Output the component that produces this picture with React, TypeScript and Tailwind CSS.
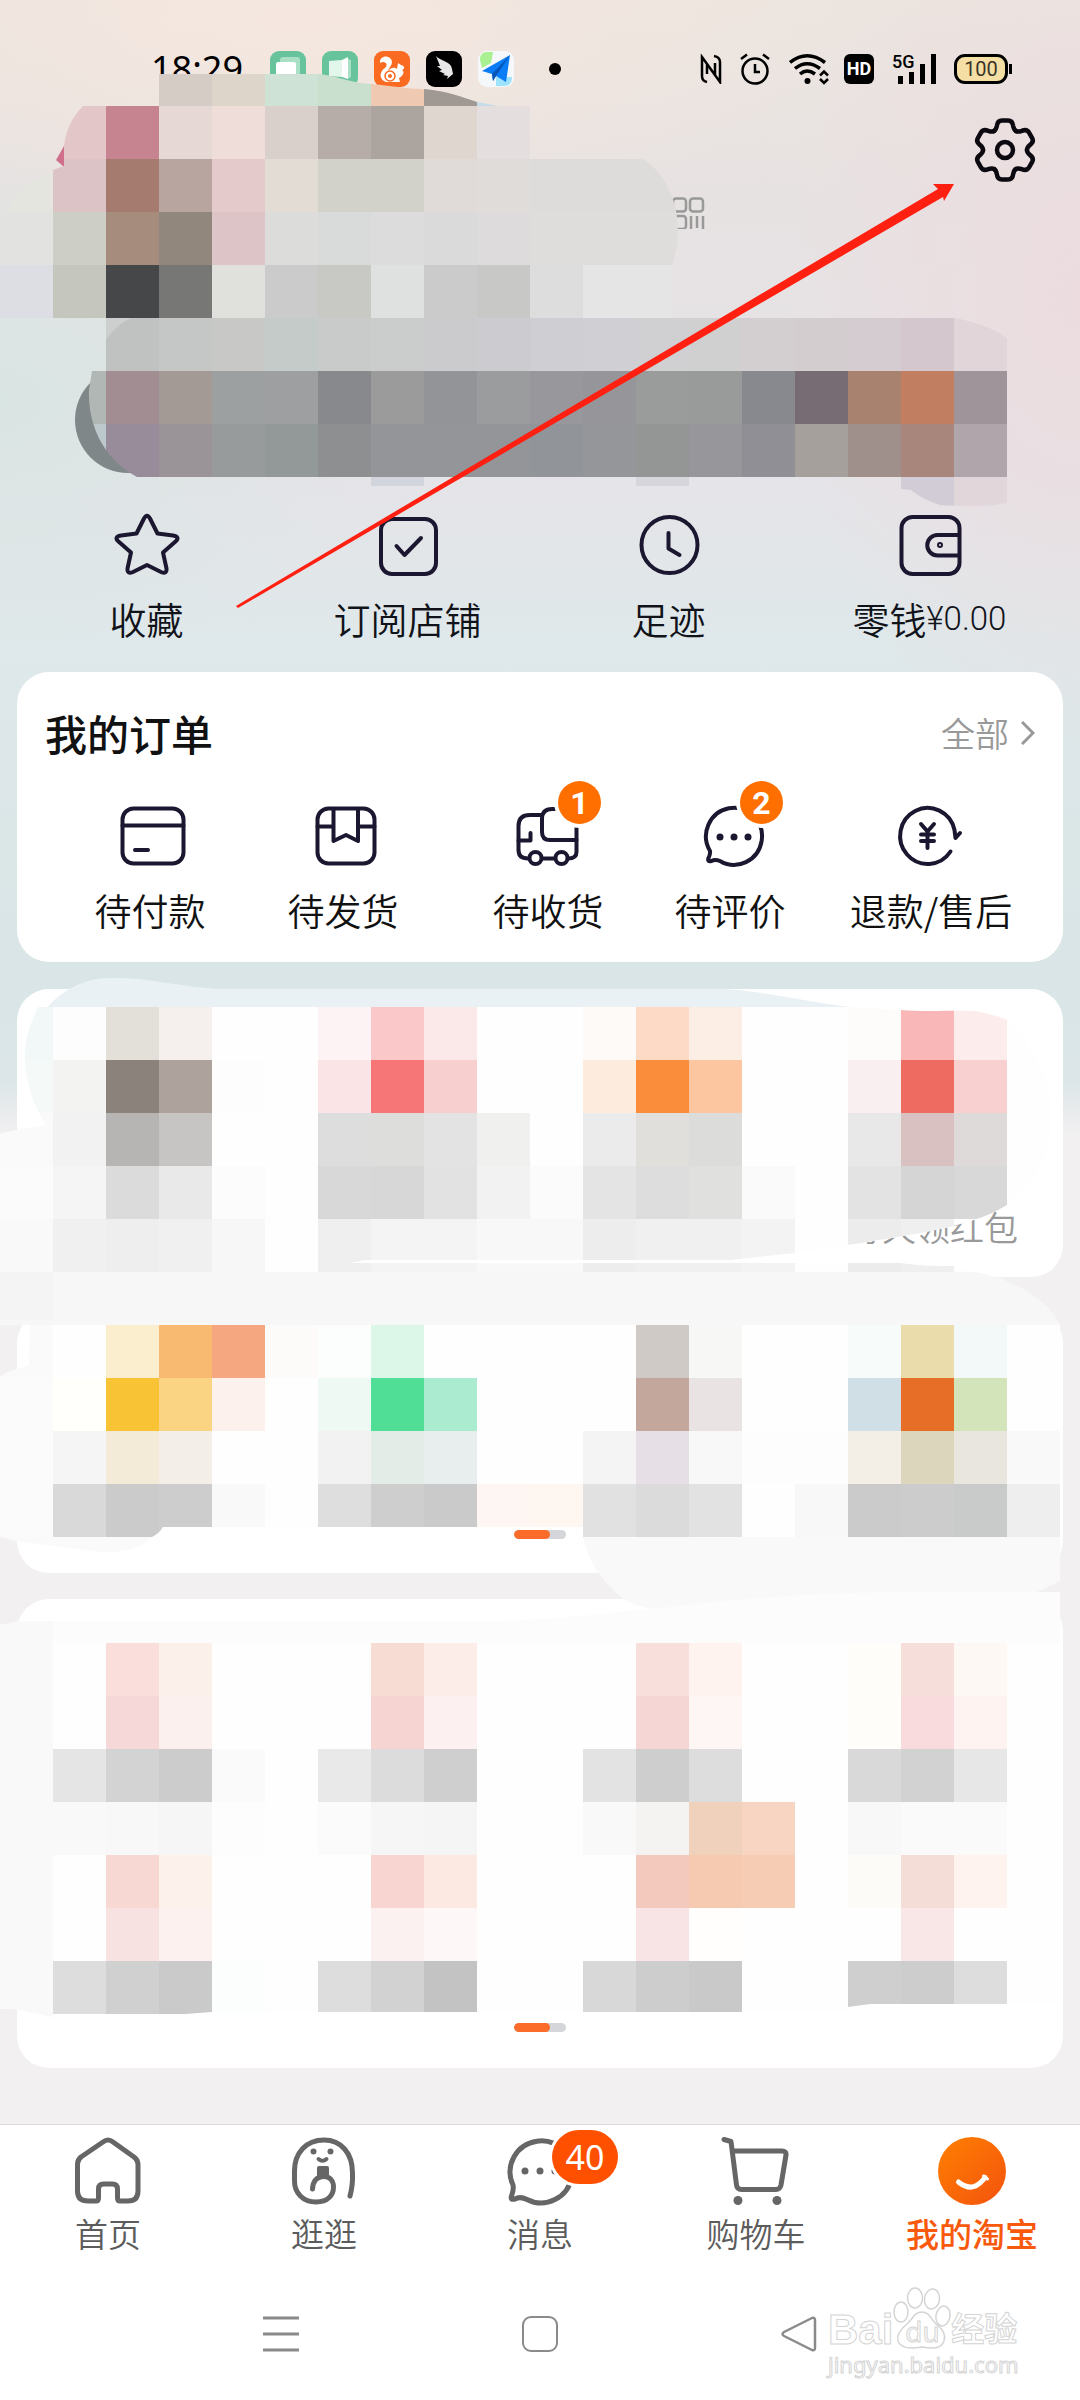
import type { ReactNode } from 'react'

type Cell = [col: number, color: string]
type Row = [row: number, cells: Cell[]]

const CELL = 53

const heroRows: Row[] = [
  [1, [[3, '#d5ccc5'], [4, '#ddd4ca'], [5, '#cfe2d6'], [6, '#c9e0cf'], [7, '#efc9b1'], [8, '#9f9893'], [9, '#c5dbe6']]],
  [2, [[1, '#e3c7c8'], [2, '#c68390'], [3, '#e5d8d5'], [4, '#efddd9'], [5, '#dad0cb'], [6, '#b6ada8'], [7, '#aca49e'], [8, '#dfd6d0'], [9, '#e4dfde']]],
  [3, [[0, '#e4e5df'], [1, '#dcc4c6'], [2, '#a57a6f'], [3, '#b8a5a0'], [4, '#e5cacc'], [5, '#e2dcd5'], [6, '#d2d2cb'], [7, '#d2d2cb'], [8, '#e0dbd8'], [9, '#e0dcd9'], [10, '#dedcda'], [11, '#dedcda'], [12, '#dedcda']]],
  [4, [[0, '#e2e2e1'], [1, '#cdcec6'], [2, '#a68c7d'], [3, '#91877d'], [4, '#ddc4c7'], [5, '#dcdcda'], [6, '#d9dada'], [7, '#dcdcdc'], [8, '#dadada'], [9, '#dddbdb'], [10, '#dedddc'], [11, '#dedddc'], [12, '#dedddc']]],
  [5, [[0, '#dddde4'], [1, '#c5c6be'], [2, '#464749'], [3, '#777775'], [4, '#e0e1dc'], [5, '#cbcbcb'], [6, '#c8c8c5'], [7, '#dfe1e0'], [8, '#cbcbcb'], [9, '#c8c8c7'], [10, '#dedddd'], [11, '#e6e5e5'], [12, '#e6e5e5']]],
  [6, [[2, '#c0c2c1'], [3, '#c5c6c6'], [4, '#c8c9c6'], [5, '#c5cbc9'], [6, '#c9cbca'], [7, '#cbcccc'], [8, '#cbcbcd'], [9, '#cccbcf'], [10, '#cfced2'], [11, '#d0cfd3'], [12, '#d0cfd2'], [13, '#d0d0d1'], [14, '#d3cfd1'], [15, '#d3cdd0'], [16, '#d5ccd1'], [17, '#d4c8ce'], [18, '#e2d5d9']]],
  [7, [[1, '#b0b7b5'], [2, '#a18d92'], [3, '#a39995'], [4, '#9da0a1'], [5, '#9e9fa1'], [6, '#87898d'], [7, '#9b9b9c'], [8, '#929498'], [9, '#9b9c9d'], [10, '#97979c'], [11, '#96969a'], [12, '#9a9b9b'], [13, '#999a9a'], [14, '#88888f'], [15, '#786c74'], [16, '#a9816f'], [17, '#c17e61'], [18, '#9e9499']]],
  [8, [[1, '#bcc8cc'], [2, '#988c9b'], [3, '#9a9499'], [4, '#989b9b'], [5, '#939899'], [6, '#8e8f91'], [7, '#949598'], [8, '#949599'], [9, '#949599'], [10, '#919499'], [11, '#94969a'], [12, '#949696'], [13, '#96969b'], [14, '#8f8f95'], [15, '#a5a09c'], [16, '#a0908c'], [17, '#a9867b'], [18, '#afa5aa']]],
  [9, [[7, '#d2d5dc'], [12, '#d7d6dd'], [17, '#d1ccd5'], [18, '#e1d7db']]],
]

const serviceRows: Row[] = [
  [19, [[0, '#f2f8f8'], [1, '#fdfdfd'], [2, '#e3dfd9'], [3, '#f5f0ed'], [6, '#fef3f4'], [7, '#fac8c9'], [8, '#fbe9e9'], [11, '#fefaf8'], [12, '#fcdac6'], [13, '#fceee4'], [16, '#fdfcfa'], [17, '#f9b7b8'], [18, '#fcecec']]],
  [20, [[0, '#f5f9f8'], [1, '#f3f3f1'], [2, '#8c827c'], [3, '#ada29c'], [4, '#fdfdfd'], [6, '#fbe4e6'], [7, '#f67576'], [8, '#f8cfcf'], [11, '#fdebde'], [12, '#fa8d3c'], [13, '#fcc6a1'], [16, '#f9eff0'], [17, '#ee6b62'], [18, '#f9d0d0']]],
  [21, [[0, '#fafafa'], [1, '#f2f2f2'], [2, '#b6b5b3'], [3, '#c6c5c3'], [4, '#fefefe'], [6, '#dddddd'], [7, '#dddddb'], [8, '#e3e3e3'], [9, '#f0f0ee'], [11, '#ebebeb'], [12, '#e0dfdc'], [13, '#dcdcda'], [14, '#fefefe'], [16, '#e8e8e8'], [17, '#d9c1c1'], [18, '#dddad9']]],
  [22, [[0, '#fbfbfb'], [1, '#f5f5f5'], [2, '#dbdbdb'], [3, '#e9e9e9'], [4, '#fcfcfc'], [6, '#d8d8d8'], [7, '#d7d7d7'], [8, '#e2e2e2'], [9, '#f2f2f2'], [10, '#fbfbfb'], [11, '#e4e4e4'], [12, '#dddddd'], [13, '#e0e0df'], [14, '#fafafa'], [15, '#fefefe'], [16, '#e3e3e3'], [17, '#d5d5d5'], [18, '#d8d8d8']]],
  [23, [[0, '#f9f9f9'], [1, '#f0f0f0'], [2, '#eeeeee'], [3, '#f0f0f0'], [4, '#f7f7f7'], [6, '#efefef'], [7, '#f4f4f4'], [8, '#f4f4f4'], [9, '#f8f8f8'], [10, '#f8f8f8'], [11, '#ededed'], [12, '#f0f0f0'], [13, '#f0f0f0'], [14, '#f3f3f3'], [16, '#ececec'], [17, '#efefef']]],
]

const toolRows: Row[] = [
  [25, [[0, '#fafafa'], [2, '#fbeecf'], [3, '#f8b970'], [4, '#f5a77f'], [5, '#fdfbf9'], [6, '#fbfefd'], [7, '#dcf6e8'], [12, '#d0cac6'], [13, '#f7f7f5'], [16, '#f7fcfb'], [17, '#eaddab'], [18, '#f3f9f9']]],
  [26, [[0, '#fbfbfb'], [1, '#fffffc'], [2, '#f8c335'], [3, '#fad482'], [4, '#fdf1ee'], [6, '#edf9f2'], [7, '#50de97'], [8, '#abecd0'], [12, '#c3a79c'], [13, '#e9e4e3'], [16, '#d0dfe5'], [17, '#e76e26'], [18, '#d4e4ba']]],
  [27, [[0, '#fbfbfb'], [1, '#f5f5f5'], [2, '#f3ead7'], [3, '#f3efe8'], [6, '#f2f2f2'], [7, '#e3ece7'], [8, '#e8eeed'], [11, '#f4f4f4'], [12, '#e6e0e6'], [13, '#f8f8f8'], [14, '#fdfdfd'], [15, '#fdfdfd'], [16, '#f3efe6'], [17, '#dcd6bc'], [18, '#e8e6df'], [19, '#f9f9f9']]],
  [28, [[0, '#fbfbfb'], [1, '#d9d9d9'], [2, '#cbcbcb'], [3, '#cdcdcd'], [4, '#f9f9f9'], [6, '#dedede'], [7, '#cecece'], [8, '#cacaca'], [9, '#fef6f3'], [10, '#fdf6f1'], [11, '#e1e1e1'], [12, '#dbdbdb'], [13, '#e2e2e2'], [15, '#f8f8f8'], [16, '#cbcbcb'], [17, '#cccccc'], [18, '#c9cbca'], [19, '#eeeeee']]],
]

const playRows: Row[] = [
  [31, [[2, '#f9dedb'], [3, '#fbf1ea'], [7, '#f7dcd3'], [8, '#fcede8'], [12, '#f9dfdc'], [13, '#fff3f0'], [16, '#fffdfa'], [17, '#f6dfda'], [18, '#fef8f4']]],
  [32, [[2, '#f7d8d8'], [3, '#fcf0ee'], [7, '#f6d4d2'], [8, '#fcf1f0'], [12, '#f5d6d5'], [13, '#fdf6f4'], [16, '#fffdfa'], [17, '#f9dbde'], [18, '#fff3f1']]],
  [33, [[1, '#e5e5e5'], [2, '#d3d3d3'], [3, '#cccccc'], [4, '#fafafa'], [6, '#e9e9e9'], [7, '#dcdcdc'], [8, '#cfcfcf'], [11, '#e3e3e3'], [12, '#cecece'], [13, '#dddddd'], [16, '#d9d9d9'], [17, '#d2d2d2'], [18, '#e7e7e7']]],
  [34, [[1, '#f9f9f9'], [2, '#f8f8f8'], [3, '#f6f6f6'], [4, '#fdfdfd'], [6, '#fbfbfb'], [7, '#f6f6f6'], [8, '#f5f5f5'], [11, '#f9f9f9'], [12, '#f4f3f1'], [13, '#f0d2bc'], [14, '#f8d5c3'], [16, '#f8f8f8'], [17, '#fafafa'], [18, '#fafafa']]],
  [35, [[2, '#f7d8d3'], [3, '#fcf1eb'], [7, '#f8d5d0'], [8, '#fce9e2'], [12, '#f3c9be'], [13, '#f5cab1'], [14, '#f6ccb4'], [16, '#fdfbf8'], [17, '#f5ddd7'], [18, '#fff3f0']]],
  [36, [[2, '#f7e2e1'], [3, '#fdf1f0'], [7, '#fcf1f1'], [8, '#fef7f7'], [12, '#f8e4e5'], [13, '#fffefc'], [17, '#f9e6e7']]],
  [37, [[1, '#dddddd'], [2, '#d0d0d0'], [3, '#cacaca'], [4, '#fcfefe'], [6, '#dddddd'], [7, '#d2d2d2'], [8, '#c3c3c3'], [11, '#d8d8d8'], [12, '#cdcdcd'], [13, '#c9c9c9'], [16, '#cfcfcf'], [17, '#cdcdcd'], [18, '#dddddd']]],
]

function Mosaic({ rows }: { rows: Row[] }) {
  return (
    <g shapeRendering="crispEdges">
      {rows.map(([row, cells]) =>
        cells.map(([col, color]) => (
          <rect key={`${row}-${col}`} x={col * CELL} y={row * CELL} width={CELL} height={CELL} fill={color} />
        )),
      )}
    </g>
  )
}

function HeroMosaic() {
  return (
    <svg viewBox="0 0 1080 520" className="pointer-events-none absolute inset-x-0 top-0 w-full" aria-hidden="true">
      <clipPath id="hero-clip">
        <path d="M159 74H320C345 78 352 83 371 84C395 86 405 89 424 89C448 91 462 97 477 102L499 106H530V159H643C664 172 678 200 678 230C678 245 675 256 672 265V318H954C976 322 993 328 1007 338V503C985 508 960 506 940 505C928 501 920 497 911 490L901 489V477H689V486H636V477H424V486H371V477H137C124 470 115 462 106 450C94 433 88 411 89 390L92 371H106V318H0V228C2 220 4 215 6 212C15 195 33 177 53 172V170L64 166V146C66 130 72 117 83 106H159Z" />
      </clipPath>
      <path d="M56 160 64 146V167Z" fill="#cf6f8c" />
      <g clipPath="url(#hero-clip)">
        <Mosaic rows={heroRows} />
        <path d="M106 340C112 331 121 322 132 318H106Z" fill="#cccfce" />
      </g>
    </svg>
  )
}

function ServicesMosaic() {
  return (
    <svg viewBox="0 962 1080 1162" className="pointer-events-none absolute inset-x-0 top-0 w-full" aria-hidden="true">
      <clipPath id="service-clip">
        <path d="M53 1007H848L901 1010C925 1012 955 1010 975 1011C990 1014 1000 1017 1007 1020C1034 1045 1052 1080 1052 1115C1052 1160 1030 1190 1007 1205C975 1225 930 1232 848 1245L795 1253L730 1260H365L350 1263H901C920 1266 940 1266 954 1266L975 1272H0V1134C15 1129 32 1128 46 1125C30 1100 24 1075 25 1050C26 1035 32 1020 38 1007Z" />
      </clipPath>
      <clipPath id="tool-clip">
        <path d="M30 1325H1060V1537H583V1527H163C160 1532 156 1535 152 1537H0V1376C10 1370 22 1368 29 1365Z" />
      </clipPath>
      <clipPath id="play-clip">
        <path d="M53 1643H1060V2004H870L848 2007V2012H212L185 2014H53Z" />
      </clipPath>

      <path d="M48 1007C62 990 85 978 110 978C145 977 175 986 220 989H725C770 992 805 1002 850 1007Z" fill="#eaf1f4" />
      <g clipPath="url(#service-clip)">
        <path d="M0 1007H1060V1272H0Z" fill="#fefefe" />
        <path d="M0 1113H53V1272H0Z" fill="#fafafa" />
        <Mosaic rows={serviceRows} />
      </g>

      <path d="M0 1272H975C1010 1278 1048 1298 1060 1325H0Z" fill="#f7f7f7" />
      <path d="M0 1272H53V1320H0Z" fill="#f4f4f4" />
      <g clipPath="url(#tool-clip)">
        <path d="M53 1325H1060V1537H53Z" fill="#fefefe" />
        <Mosaic rows={toolRows} />
      </g>
      <path d="M0 1537H152C140 1549 122 1553 100 1552C75 1548 45 1545 16 1541Z" fill="#fafafa" />
      <path d="M583 1537H1060V1581L1037 1592C960 1592 840 1592 750 1606C700 1614 650 1614 625 1600C600 1580 588 1560 583 1537Z" fill="#f9f9f9" />

      <path d="M0 1625 22 1621H500C580 1618 610 1612 660 1608C760 1595 850 1592 920 1592H1060V1643H0Z" fill="#fcfcfc" />
      <path d="M0 1625 22 1621H53V2017C35 2014 20 2008 0 2009Z" fill="#f9f9f9" />
      <g clipPath="url(#play-clip)">
        <path d="M53 1643H1060V2014H53Z" fill="#fefefe" />
        <Mosaic rows={playRows} />
      </g>
    </svg>
  )
}

function Arrow() {
  return (
    <svg viewBox="0 0 1080 672" className="pointer-events-none absolute inset-x-0 top-0 w-full" aria-hidden="true">
      <path d="M236 606 938 189 933 184H954L944 201 943 197 238 608Z" fill="#ff2012" />
    </svg>
  )
}

function LineIcon({ children }: { children: ReactNode }) {
  return (
    <svg
      viewBox="0 0 64 64"
      className="h-16 w-16 overflow-visible"
      fill="none"
      stroke="#1c1730"
      strokeWidth="4"
      strokeLinecap="round"
      strokeLinejoin="round"
      aria-hidden="true"
    >
      {children}
    </svg>
  )
}

function TabIcon({ children }: { children: ReactNode }) {
  return (
    <svg
      viewBox="0 0 72 72"
      className="h-[72px] w-[72px]"
      fill="none"
      stroke="#666"
      strokeWidth="5"
      strokeLinecap="round"
      strokeLinejoin="round"
      aria-hidden="true"
    >
      {children}
    </svg>
  )
}

const shortcuts = [
  {
    label: '收藏',
    icon: (
      <path d="M29 6.5Q32 1 35 6.5L42.5 21.5 58 23.5Q65.500 25 60.500 29.500L48 40.500 51.500 56.500Q52 62.500 46 60L32 53 18 60Q12 62.500 12.500 56.500L16 40.500 3.500 29.500Q-1.500 25 6 23.500L21.500 21.500Z" />
    ),
  },
  {
    label: '订阅店铺',
    icon: (
      <>
        <rect x="5" y="7" width="55" height="55" rx="11" />
        <path d="M20.500 34 28.500 43 45 26" />
      </>
    ),
  },
  {
    label: '足迹',
    icon: (
      <>
        <circle cx="32.500" cy="33" r="28" />
        <path d="M31.500 21V36.500L42.500 43" />
      </>
    ),
  },
  {
    label: '零钱',
    amount: '¥0.00',
    icon: (
      <>
        <rect x="3.500" y="5" width="58" height="57" rx="11" />
        <path d="M61 23H39.500A10.200 10.200 0 0 0 39.500 43.500H61" />
        <circle cx="42" cy="33" r="1" />
      </>
    ),
  },
]

const orders = [
  {
    label: '待付款',
    icon: (
      <>
        <rect x="4.500" y="4.500" width="61" height="55" rx="11" />
        <path d="M4.500 21.500H65.500M17 46H30" />
      </>
    ),
  },
  {
    label: '待发货',
    icon: (
      <>
        <rect x="6.500" y="4.500" width="57" height="55" rx="11" />
        <path d="M22.500 5V37L35 31 47 37V5M6.500 22.500H22M47 22.500H63.500" />
      </>
    ),
  },
  {
    label: '待收货',
    badge: 1,
    icon: (
      <>
        <path d="M25 11H14Q2.500 11 2.500 22V46Q2.500 54.500 12 54.500M26 54.500H38M52 54.500Q60.500 54.500 60.500 48V6" />
        <path d="M60.500 36H34Q26 36 26 28V15Q26 5 36 5H60M2.500 36.500H14.500V29" />
        <circle cx="19.500" cy="54" r="6" />
        <circle cx="45.500" cy="54" r="6" />
      </>
    ),
  },
  {
    label: '待评价',
    badge: 2,
    icon: (
      <>
        <path d="M12 47A28 28.500 0 1 1 22 57Q17 55 13.500 57Q9 58 10.500 54Q12.500 50 12 47Z" />
        <g fill="#1c1730" stroke="none">
          <circle cx="22" cy="33" r="3.500" />
          <circle cx="36" cy="33" r="3.500" />
          <circle cx="50" cy="33" r="3.500" />
        </g>
      </>
    ),
  },
  {
    label: '退款/售后',
    icon: (
      <>
        <path d="M51.500 47.500A27.500 28 0 1 1 55.500 26L56.500 34 61 29" />
        <path d="M22 20 28.500 27.500 35 20M28.500 28V44M22 30.500H35M22 37H35" />
      </>
    ),
  },
]

const tabs = [
  {
    label: '首页',
    icon: (
      <path d="M31 7Q36 3 41 7L62 22Q66 25 66 29V56Q66 66 56 66H48Q45.500 66 45.500 63V54Q45.500 49 40.500 49H31.500Q26.500 49 26.500 54V63Q26.500 66 24 66H16Q5.500 66 5.500 56V29Q5.500 25 9 22Z" />
    ),
  },
  {
    label: '逛逛',
    icon: (
      <>
        <path d="M62 61Q65 50 64.500 38C64.500 18 53 5 36 5C18 5 6.500 18 6.500 36V46C6.500 58 15 67 28 67C40 67 45.500 60 45.500 52C45.500 45 41 41.500 35.500 41.500C29 41.500 25 46 24.500 54" />
        <path d="M30.500 24Q34.500 27.500 38.500 24" strokeWidth="4" />
        <g fill="#666" stroke="none">
          <circle cx="25.500" cy="16.500" r="3" />
          <circle cx="42.500" cy="16.500" r="3" />
          <rect x="29" y="31" width="12" height="12" rx="2" />
        </g>
      </>
    ),
  },
  {
    label: '消息',
    badge: 40,
    icon: (
      <>
        <path d="M9 50A31 31 0 1 1 23 64.500Q16 61 11 64Q6 65.500 7.500 61Q10 54 9 50Z" />
        <g fill="#666" stroke="none">
          <circle cx="21" cy="36" r="3.500" />
          <circle cx="36" cy="36" r="3.500" />
          <circle cx="51" cy="36" r="3.500" />
        </g>
      </>
    ),
  },
  {
    label: '购物车',
    icon: (
      <>
        <path d="M4 4.500 11 6.500 16.500 50Q17 54.500 21.500 54.500H56Q60 54.500 61 50L66 20Q66.500 16 62 16H12.500" />
        <g fill="#666" stroke="none">
          <circle cx="18" cy="65.500" r="4.500" />
          <circle cx="57" cy="65.500" r="4.500" />
        </g>
      </>
    ),
  },
  {
    label: '我的淘宝',
    active: true,
    icon: (
      <>
        <linearGradient id="smile" x1="0" y1="0" x2="1" y2="1">
          <stop offset="0" stopColor="#ff8000" />
          <stop offset="1" stopColor="#f4530f" />
        </linearGradient>
        <circle cx="36" cy="36" r="34" fill="url(#smile)" stroke="none" />
        <path d="M22.500 47Q36 58 47 45L49 42.500" stroke="#fff" />
        <path d="M47.500 41 51.500 44" stroke="#fff" strokeWidth="3" />
      </>
    ),
  },
]

function StatusBar() {
  return (
    <header className="flex h-[106px] items-start justify-between pt-[51px] pr-[68px] pl-[151px]">
      <div className="flex h-9 items-center">
        <time className="mr-[27px] w-[92px] font-['Noto_Sans'] text-[36px] leading-8 text-black">18:29</time>
        <div className="flex gap-4">
          <svg viewBox="0 0 36 36" className="h-9 w-9" aria-hidden="true">
            <rect width="36" height="36" rx="9" fill="#66c39b" />
            <rect x="10" y="6" width="20" height="22" rx="3" fill="#a9dfc5" />
            <rect x="6" y="11" width="20" height="17" rx="2" fill="#fff" />
          </svg>
          <svg viewBox="0 0 36 36" className="h-9 w-9" aria-hidden="true">
            <rect width="36" height="36" rx="9" fill="#66c39b" />
            <path d="M7 10 20 9V26L7 25Z" fill="#e3f6ec" />
            <path d="M20 9 26 6V28L20 26Z" fill="#fff" />
            <path d="M26 8 29 9V26L26 28Z" fill="#a9dfc5" />
          </svg>
          <svg viewBox="0 0 36 36" className="h-9 w-9" aria-hidden="true">
            <rect width="36" height="36" rx="9" fill="#fa6a21" />
            <path d="M6 12C5 6 13 3 17 8C20 13 15 16 14 20C17 16 21 16 23 18L24 12 27 14C31 15 31 18 28 19C31 21 29 25 25 27L26 31H12C4 28 6 20 11 17C15 14 11 9 6 12Z" fill="#fff" />
            <circle cx="16" cy="25" r="5" fill="#fff" stroke="#fa6a21" strokeWidth="1.500" />
            <circle cx="16" cy="25" r="2" fill="#fa6a21" />
          </svg>
          <svg viewBox="0 0 36 36" className="h-9 w-9" aria-hidden="true">
            <rect width="36" height="36" rx="9" fill="#000" />
            <path d="M10 5C14 10 25 10 26 18L27 23 21 28 22 25 17 24 19 23 13 20 16 19 11 15 14 15Z" fill="#e8e8e8" />
          </svg>
          <svg viewBox="0 0 36 36" className="h-9 w-9" aria-hidden="true">
            <rect width="36" height="36" rx="9" fill="#f4f8fb" />
            <path d="M2 9Q2 1 9 1H15L13 12 4 17Z" fill="#a9f090" />
            <path d="M18 26H34Q34 35 26 35H18Z" fill="#9fe2fb" />
            <path d="M32 4 4 20 14 23 15 30 18 25 28 31Z" fill="#0a7cf5" />
            <path d="M32 4 14 23 15 30 18 25Z" fill="#0556b8" />
          </svg>
        </div>
        <span className="ml-[35px] h-3 w-3 rounded-full bg-black" />
      </div>
      <div className="flex h-9 items-center">
        <svg viewBox="0 0 24 30" className="mr-[17px] h-[30px] w-6" fill="none" stroke="#000" strokeWidth="2.500" aria-hidden="true">
          <path d="M8 28Q3 27 3 22V3L16 21V9M15 2Q21 3 21 8V28L8 10V20" />
        </svg>
        <svg viewBox="0 0 30 32" className="mr-[19px] h-8 w-[30px]" fill="none" stroke="#000" strokeWidth="2.500" aria-hidden="true">
          <circle cx="15" cy="18" r="12.500" />
          <path d="M15 11V19H20M1 6 7 1.500M23 1.500 29 6" />
        </svg>
        <svg viewBox="0 0 40 32" className="mr-[15px] h-8 w-10" fill="none" stroke="#000" strokeWidth="3.500" aria-hidden="true">
          <path d="M1 9.500Q18 -4 36 9.500M6 15.500Q18 6 31 15.500M11 21Q18 15 26 21" />
          <circle cx="18.500" cy="28" r="3" fill="#000" stroke="none" />
          <path d="M31 22.500 35 18.500 39 22.500M31 26 35 30 39 26" strokeWidth="2.500" />
        </svg>
        <span className="mr-[18px] flex h-[30px] w-[30px] items-center justify-center rounded-md bg-black font-['Roboto'] text-[18px] leading-none font-bold text-white">
          HD
        </span>
        <span className="relative mr-[18px] h-[30px] w-11">
          <span className="absolute top-0 left-0 font-['Roboto'] text-[18px] leading-4 font-medium text-black">5G</span>
          <svg viewBox="0 0 44 30" className="h-[30px] w-11" aria-hidden="true">
            <path d="M6 22H11V30H6ZM17 18H22V30H17ZM28 10H33V30H28ZM39 0H44V30H39Z" fill="#000" />
          </svg>
        </span>
        <span className="flex h-[30px] w-[54px] items-center justify-center rounded-[11px] border-3 border-black bg-[#f5dfa4] font-['Roboto'] text-[20px] leading-none text-[#3b3428]">
          100
        </span>
        <span className="ml-px h-[10px] w-[3px] bg-black" />
      </div>
    </header>
  )
}

function Profile() {
  return (
    <section>
      <div className="flex justify-end pt-3 pr-[43px]">
        <button type="button" aria-label="设置" className="h-16 w-16">
          <svg viewBox="-32 -32 64 64" className="h-16 w-16" fill="none" stroke="#0c0a10" strokeWidth="4.500" strokeLinecap="round" aria-hidden="true">
            {[0, 60, 120, 180, 240, 300].map((angle) => (
              <path
                key={angle}
                transform={`rotate(${angle})`}
                d="M-11 -19Q-8.800 -20.300 -8.200 -24Q-7.500 -29.500 -3 -29.500H3Q7.500 -29.500 8.200 -24Q8.800 -20.300 11 -19"
              />
            ))}
            <circle r="8" />
          </svg>
        </button>
      </div>
      <div className="pt-[15px] pl-[62%]">
        <button type="button" aria-label="二维码" className="block h-8">
          <svg viewBox="0 0 36 32" className="h-8 w-9" fill="none" stroke="#999" strokeWidth="2.500" aria-hidden="true">
            <rect x="3" y="1.500" width="13" height="13" rx="3" />
            <rect x="20" y="1.500" width="13" height="13" rx="3" />
            <rect x="3" y="19" width="13" height="13" rx="3" />
            <path d="M21 19V32M27 19V31M33 19V32" />
          </svg>
        </button>
      </div>
      <div className="mt-[138px] mr-[80px] ml-[75px] h-[106px] rounded-full bg-[#7f8789]" />
    </section>
  )
}

function Shortcuts() {
  return (
    <nav className="grid grid-cols-4 pt-[39px] pr-5 pb-[29px] pl-4">
      {shortcuts.map((item) => (
        <a key={item.label} href="#" className="flex flex-col items-center">
          <LineIcon>{item.icon}</LineIcon>
          <span className="mt-[19px] flex h-12 items-center text-[37px] leading-[48px] font-[350] whitespace-nowrap text-[#11131a]">
            {item.label}
            {item.amount && <span className="font-['Roboto'] text-[33px] font-light">{item.amount}</span>}
          </span>
        </a>
      ))}
    </nav>
  )
}

function OrdersCard() {
  return (
    <section className="mx-[17px] rounded-[32px] bg-white pt-[31px] pb-7">
      <div className="flex items-center justify-between px-7">
        <h2 className="text-[42px] leading-[60px] font-medium text-[#111]">我的订单</h2>
        <a href="#" className="flex items-center gap-3 text-[34px] leading-[48px] font-[350] text-[#999]">
          全部
          <svg viewBox="0 0 14 24" className="h-6 w-[14px]" fill="none" stroke="#999" strokeWidth="3" aria-hidden="true">
            <path d="M1 1 12 12 1 23" />
          </svg>
        </a>
      </div>
      <div className="mt-[41px] grid grid-cols-[194fr_192fr_218fr_146fr_256fr] pr-1 pl-9">
        {orders.map((item) => (
          <a key={item.label} href="#" className="flex flex-col items-center">
            <span className="relative">
              <LineIcon>{item.icon}</LineIcon>
              {item.badge && (
                <span className="absolute -top-[23px] left-[42px] flex h-[43px] w-[43px] items-center justify-center rounded-full bg-[#ff6f00] font-['Roboto'] text-[32px] leading-none font-bold text-white ring-4 ring-white">
                  {item.badge}
                </span>
              )}
            </span>
            <span className="mt-[18px] text-[37px] leading-[48px] font-[350] whitespace-nowrap text-[#111]">{item.label}</span>
          </a>
        ))}
      </div>
    </section>
  )
}

function Pager() {
  return (
    <div className="mx-auto h-[9px] w-[52px] overflow-hidden rounded-full bg-[#d5d6da]">
      <div className="h-full w-9 rounded-full bg-[#fb6c2b]" />
    </div>
  )
}

function Services() {
  return (
    <div className="relative px-[17px] pt-[27px] pb-14">
      <section className="flex min-h-[288px] items-end justify-end rounded-[32px] bg-white pr-[45px] pb-[26px]">
        <a href="#" className="text-[34px] leading-[48px] font-[350] text-[#999]">
          每天领红包
        </a>
      </section>
      <section className="mt-[34px] flex min-h-[262px] items-end rounded-[32px] bg-white pb-[34px]">
        <Pager />
      </section>
      <section className="mt-[26px] flex min-h-[469px] items-end rounded-[32px] bg-white pb-9">
        <Pager />
      </section>
      <ServicesMosaic />
    </div>
  )
}

function TabBar() {
  return (
    <nav className="grid grid-cols-5 border-t border-[#dcdadb] bg-white pt-[10px]">
      {tabs.map((tab) => (
        <a key={tab.label} href="#" className="flex flex-col items-center">
          <span className="relative">
            <TabIcon>{tab.icon}</TabIcon>
            {tab.badge && (
              <span className="absolute -top-[5px] left-12 flex h-[54px] w-[66px] items-center justify-center rounded-full bg-[#ff5000] font-['Noto_Sans'] text-[34px] leading-none text-white ring-3 ring-white">
                {tab.badge}
              </span>
            )}
          </span>
          <span
            className={
              tab.active
                ? 'mt-1.5 text-[33px] leading-10 font-medium text-[#f8590c]'
                : 'mt-1.5 text-[33px] leading-10 font-[350] text-[#5c5c5c]'
            }
          >
            {tab.label}
          </span>
        </a>
      ))}
    </nav>
  )
}

function Watermark() {
  return (
    <div className="absolute right-[58px] bottom-6 w-[194px] whitespace-nowrap text-white [-webkit-text-stroke:1px_#d4d4d4]">
      <div className="flex items-end">
        <span className="font-['Liberation_Sans'] text-[42px] leading-[45px] font-bold">Bai</span>
        <span className="relative shrink-0">
          <svg viewBox="0 0 58 66" className="h-[66px] w-[58px]" fill="#fff" stroke="#d4d4d4" strokeWidth="1.500" aria-hidden="true">
            <ellipse cx="8" cy="26" rx="7" ry="10" />
            <ellipse cx="22" cy="12" rx="7.500" ry="10" />
            <ellipse cx="39" cy="13" rx="7.500" ry="10" transform="rotate(8 39 13)" />
            <ellipse cx="50" cy="30" rx="7" ry="10" transform="rotate(10 50 30)" />
            <path d="M29 26C36 26 38 33 43 38C50 43 53 49 51 55C48 63 40 63 29 61C18 63 8 63 5 55C3 49 8 43 14 38C20 33 21 26 29 26Z" />
          </svg>
          <span className="absolute bottom-[5px] left-3 font-['Open_Sans'] text-[28px] leading-8">du</span>
        </span>
        <span className="text-[33px] leading-[50px] font-bold">经验</span>
      </div>
      <div className="font-['Noto_Sans'] text-[22px] leading-6">jingyan.baidu.com</div>
    </div>
  )
}

function SystemNav() {
  return (
    <footer className="relative bg-white pt-[63px] pb-12">
      <div className="mx-auto grid w-[72%] grid-cols-3 justify-items-center">
        <button type="button" aria-label="最近任务" className="h-9 w-9">
          <svg viewBox="0 0 36 36" className="h-9 w-9" stroke="#8a8a8a" strokeWidth="3" aria-hidden="true">
            <path d="M0 2H36M0 18H36M0 34H36" />
          </svg>
        </button>
        <button type="button" aria-label="主屏幕" className="h-9 w-9 rounded-[9px] border-2 border-[#8a8a8a]" />
        <button type="button" aria-label="返回" className="h-9 w-9">
          <svg viewBox="0 0 36 36" className="h-9 w-9" fill="none" stroke="#8a8a8a" strokeWidth="2.500" strokeLinejoin="round" aria-hidden="true">
            <path d="M3 16 31 2Q34 1 34 4V32Q34 35 31 34L3 20Q0 18 3 16Z" />
          </svg>
        </button>
      </div>
      <Watermark />
    </footer>
  )
}

export default function App() {
  return (
    <div className="flex min-h-screen flex-col bg-[#f2f0f1] bg-[radial-gradient(560px_200px_at_28%_20px,#f5e7df_0%,transparent_100%),radial-gradient(300px_460px_at_100%_300px,#ecdcdf_0%,transparent_100%),radial-gradient(380px_260px_at_0px_400px,#d9e5e3_0%,transparent_100%),linear-gradient(180deg,#ece5df_0px,#e7e2e2_200px,#e5e4e8_480px,#dfe8ea_640px,#d9e5e6_970px,#dce6e8_1080px,#f2f0f1_1135px)] font-['Noto_Sans_CJK_SC',sans-serif]">
      <div className="relative">
        <StatusBar />
        <Profile />
        <Shortcuts />
        <HeroMosaic />
        <Arrow />
      </div>
      <OrdersCard />
      <Services />
      <div className="mt-auto">
        <TabBar />
        <SystemNav />
      </div>
    </div>
  )
}
